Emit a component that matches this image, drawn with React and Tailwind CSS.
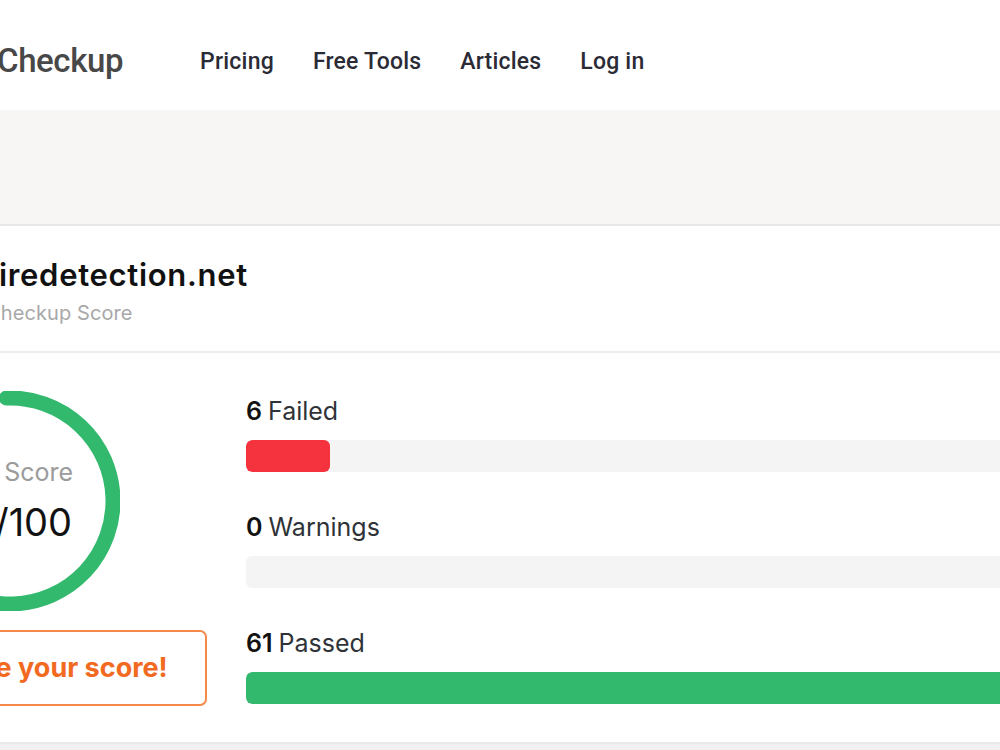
import React from "react";

const bars = [
  { count: 6, label: "Failed", pct: 9.3, color: "bg-[#f5333f]" },
  { count: 0, label: "Warnings", pct: 0, color: "bg-[#f5a623]" },
  { count: 61, label: "Passed", pct: 100, color: "bg-[#33b96e]" },
];

function ScoreRing() {
  const r = 103;
  const c = 2 * Math.PI * r;
  const score = 0.91;
  return (
    <div className="relative w-[220px] h-[220px] shrink-0">
      <svg width="220" height="220" viewBox="0 0 220 220" className="absolute inset-0">
        <circle
          cx="110"
          cy="110"
          r={r}
          fill="none"
          stroke="#33b96e"
          strokeWidth="15"
          strokeLinecap="round"
          strokeDasharray={`${c * score} ${c}`}
          transform="rotate(-92 110 110)"
        />
      </svg>
      <div className="absolute inset-0 flex flex-col items-center justify-center">
        <span className="text-[25px] leading-[28px] text-[#9b9b9b] -ml-[4px]">Your Score</span>
        <span className="text-[38px] leading-[46px] text-[#111] mt-[13px] ml-[8px]">91/100</span>
      </div>
    </div>
  );
}

export default function App() {
  return (
    <div className="h-[750px] w-full overflow-hidden bg-[#f1f1f1] font-['Inter',sans-serif]">
      <header className="h-[110px] bg-white flex items-center font-['Roboto',sans-serif]">
        <div className="flex items-center -ml-[3px] pt-[13px]">
          <div className="text-[33px] font-medium text-[#484848] tracking-[-0.4px] pb-[2px]">
            Checkup
          </div>
          <nav className="flex items-center gap-[39px] ml-[77px] text-[23px] font-medium text-[#2b2b36] tracking-[0.2px] pt-[2px]">
            <a>Pricing</a>
            <a>Free Tools</a>
            <a>Articles</a>
            <a>Log in</a>
          </nav>
        </div>
      </header>

      <div className="h-[116px] bg-[#f7f6f4] border-b-2 border-[#e7e7e7]" />

      <section className="bg-white border-b-2 border-[#e9e9e9] -ml-[118px]">
        <div className="h-[127px] border-b-2 border-[#ececec] flex flex-col justify-center pl-[104px] pt-[6px]">
          <h1 className="text-[31px] leading-[36px] font-semibold text-[#111] tracking-[0.7px]">
            firedetection.net
          </h1>
          <p className="text-[20px] leading-[26px] text-[#a8a8a8] mt-[7px] tracking-[0.1px]">Checkup Score</p>
        </div>

        <div className="flex pt-[38px] pb-[36px]">
          <div className="w-[325px] shrink-0 flex flex-col">
            <div className="ml-[18px]">
              <ScoreRing />
            </div>
            <button className="mt-[19px] h-[76px] w-full rounded-[7px] border-2 border-[#f5894a] text-[27px] font-bold text-[#f26a1f] pr-[17px]">
              Improve your score!
            </button>
          </div>

          <div className="ml-[39px] w-[900px] shrink-0 flex flex-col pt-[5px]">
            {bars.map((b, i) => (
              <div key={b.label} className={i > 0 ? "mt-[40px]" : ""}>
                <div className="h-[32px] flex items-center text-[25px] text-[#2f3338]">
                  <span className="font-semibold text-[#111]">{b.count}</span>
                  <span className="ml-[6px]">{b.label}</span>
                </div>
                <div className="mt-[12px] h-[32px] rounded-[6px] bg-[#f4f4f4] overflow-hidden">
                  <div className={`h-full rounded-[6px] ${b.color}`} style={{ width: `${b.pct}%` }} />
                </div>
              </div>
            ))}
          </div>
        </div>
      </section>
    </div>
  );
}
